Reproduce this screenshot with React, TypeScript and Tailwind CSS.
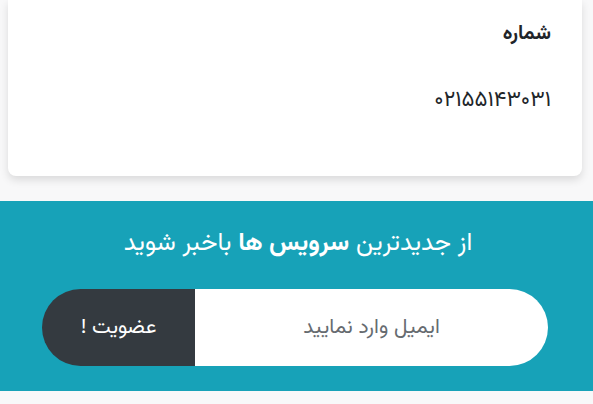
// فوتر تماس و خبرنامه

const FONT = { fontFamily: '"Vazirmatn", "Noto Sans Arabic", "DejaVu Sans", sans-serif' };

export default function App() {
    return (
        <div dir="rtl" style={FONT} className="w-[593px] h-[404px] overflow-hidden bg-[#f8f8f9]">
            {/* کارت اطلاعات تماس */}
            <div className="pl-2 pr-[11px]">
                <div className="bg-white rounded-b-lg shadow-[0_4px_8px_rgba(0,0,0,0.12)] h-[176px] pr-[31px] pt-[18px]">
                    <div className="text-[20px] font-bold text-[#212529] leading-[32px]">شماره</div>
                    <div className="mt-[35px] text-[22px] text-[#212529] leading-[32px]">۰۲۱۵۵۱۴۳۰۳۱</div>
                </div>
            </div>

            {/* خبرنامه */}
            <div className="mt-[25px] bg-[#17a2b8] h-[190px] flex flex-col items-center pt-[26px]">
                <div className="text-white text-[25px] leading-[34px] pl-[3px]">
                    از جدیدترین <span className="font-bold">سرویس ها</span> باخبر شوید
                </div>
                <div className="mt-[28px] mr-[3px] w-[506px] h-[77px] flex rounded-full overflow-hidden">
                    <div className="flex-1 bg-white flex items-center justify-center text-[21px] text-[#666b70]">
                        ایمیل وارد نمایید
                    </div>
                    <div className="w-[153px] bg-[#343a40] flex items-center justify-center text-white text-[21px]">
                        عضویت !
                    </div>
                </div>
            </div>
        </div>
    );
}
